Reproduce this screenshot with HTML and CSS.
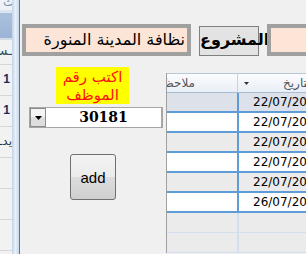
FILE: index.html
```html
<!DOCTYPE html>
<html>
<head>
    <meta charset="utf-8">
    <title>Employees</title>
    <link rel="stylesheet" href="styles.css">
</head>
<body>
<div class="screen">
    <div class="side">
        <div class="side-top">ث</div>
        <div class="side-band"></div>
        <div class="side-head"></div>
        <div class="side-cap">ـسـ</div>
        <div class="side-row">1</div>
        <div class="side-row">1</div>
        <div class="side-row side-ar">يدـ</div>
        <div class="side-row"></div>
        <div class="side-row"></div>
        <div class="side-row"></div>
    </div>
    <div class="frame"></div>
    <div class="main">
        <div class="top-row">
            <div class="field wide">نظافة المدينة المنورة</div>
            <div class="caption">المشروع</div>
            <div class="field rest"></div>
        </div>
        <div class="lower">
            <div class="form-col">
                <div class="hint">اكتب رقم<br>الموظف</div>
                <div class="combo">
                    <span class="drop">
                        <svg width="7" height="4" viewBox="0 0 7 4"><polygon points="0,0 7,0 3.5,4" fill="#000"/></svg>
                    </span>
                    <span class="value">30181</span>
                </div>
                <button type="button" class="add">add</button>
            </div>
            <div class="grid">
                <div class="row head">
                    <div class="cell notes"><span dir="rtl">ملاحظات</span></div>
                    <div class="cell date">
                        <svg width="5" height="3" viewBox="0 0 5 3"><polygon points="0,0 5,0 2.5,3" fill="#333"/></svg>
                        <span class="head-text" dir="rtl">التاريخ</span>
                    </div>
                </div>
                <div class="row first"><div class="cell notes"></div><div class="cell date">22/07/2015</div></div>
                <div class="row"><div class="cell notes"></div><div class="cell date">22/07/2015</div></div>
                <div class="row alt"><div class="cell notes"></div><div class="cell date">22/07/2015</div></div>
                <div class="row"><div class="cell notes"></div><div class="cell date">22/07/2015</div></div>
                <div class="row alt"><div class="cell notes"></div><div class="cell date">22/07/2015</div></div>
                <div class="row"><div class="cell notes"></div><div class="cell date">26/07/2015</div></div>
                <div class="row empty"><div class="cell notes"></div><div class="cell date"></div></div>
                <div class="row empty"><div class="cell notes"></div><div class="cell date"></div></div>
            </div>
        </div>
    </div>
</div>
</body>
</html>
```

FILE: styles.css
```css
* {
    box-sizing: border-box;
}

body {
    margin: 0;
    background: #f0f0f0;
    font-family: "DejaVu Sans", sans-serif;
    overflow: hidden;
}

.screen {
    display: flex;
    width: 306px;
    height: 254px;
    overflow: hidden;
}

/* window behind, only its edge shows */
.side {
    width: 12px;
    flex: none;
    background: #f2f2f2;
    overflow: hidden;
    display: flex;
    flex-direction: column;
}

.side-top {
    height: 10px;
    background: #eef2f7;
    color: #7f93ad;
    font-size: 12px;
    line-height: 4px;
    padding-left: 3px;
    overflow: hidden;
}

.side-band {
    height: 3px;
    background: #dce6f2;
}

.side-head {
    height: 27px;
    background: linear-gradient(#aac1dd, #9cb5d5);
    border-bottom: 2px solid #d3dce7;
}

.side-cap {
    height: 25px;
    border-bottom: 1px solid #d6d6d6;
    color: #2c4c5c;
    font-size: 13px;
    line-height: 22px;
    text-align: right;
    white-space: nowrap;
    direction: rtl;
    overflow: hidden;
}

.side-row {
    height: 31px;
    flex: none;
    border-bottom: 1px solid #d6d6d6;
    color: #1c2b5b;
    font: bold 12px "Liberation Sans", sans-serif;
    line-height: 28px;
    text-align: right;
    padding-right: 2px;
    overflow: hidden;
}

.side-ar {
    font: 12px "DejaVu Sans", sans-serif;
    line-height: 28px;
    padding-right: 0;
    white-space: nowrap;
    direction: rtl;
    color: #223344;
}

.frame {
    width: 8px;
    flex: none;
    background: linear-gradient(90deg, #c0d3ea, #eaf1f9 50%, #c5d6eb);
    border-right: 1px solid #737373;
}

.main {
    flex: 1;
    min-width: 0;
    overflow: hidden;
    padding-top: 24px;
    padding-left: 2px;
}

.top-row {
    display: flex;
    align-items: flex-end;
    gap: 8px;
    height: 32px;
}

.field {
    flex: none;
    height: 32px;
    border: 4px solid #a0a0a0;
    background: #fce4d6;
}

.field.wide {
    width: 169px;
    direction: rtl;
    font-size: 16px;
    line-height: 23px;
    padding-right: 2px;
    white-space: nowrap;
    overflow: hidden;
}

.field.rest {
    width: 60px;
}

.caption {
    flex: none;
    width: 60px;
    height: 30px;
    border: 1px solid #7f7f7f;
    background: #e3e3e3;
    font-weight: bold;
    font-size: 16px;
    line-height: 26px;
    text-align: center;
    white-space: nowrap;
}

.lower {
    display: flex;
    margin-top: 11px;
}

.form-col {
    width: 144px;
    flex: none;
    display: flex;
    flex-direction: column;
}

.hint {
    margin-left: 34px;
    width: 73px;
    height: 37px;
    background: #ffff00;
    color: #ff1010;
    text-align: center;
    direction: rtl;
    font-size: 15px;
    line-height: 18px;
    padding-top: 1px;
}

.combo {
    margin-top: 3px;
    margin-left: 7px;
    width: 134px;
    height: 21px;
    border: 1px solid #a6a6a6;
    border-right-width: 2px;
    background: #fff;
    display: flex;
}

.drop {
    width: 16px;
    height: 19px;
    border: 1px solid #8c8c8c;
    background: linear-gradient(#f4f4f4 50%, #dedede 50%);
    display: flex;
    align-items: center;
    justify-content: center;
}

.value {
    flex: 1;
    text-align: center;
    font: bold 14px "DejaVu Serif", serif;
    line-height: 19px;
}

.add {
    margin-top: 26px;
    margin-left: 48px;
    width: 46px;
    height: 46px;
    padding: 0;
    border: 1px solid #707070;
    border-radius: 3px;
    background: linear-gradient(#f3f3f3, #ebebeb 50%, #dddddd 50%, #cfcfcf);
    font: 15px "Liberation Sans", sans-serif;
    color: #000;
}

/* data grid */
.grid {
    margin-top: 6px;
    width: 200px;
    flex: none;
    border-left: 1px solid #a0a0a0;
}

.row {
    display: flex;
    height: 20px;
    border-bottom: 2px solid #5f9bd6;
}

.cell {
    white-space: nowrap;
    overflow: hidden;
    font-size: 12px;
    line-height: 18px;
}

.cell.notes {
    width: 70px;
    flex: none;
}

.cell.date {
    flex: 1;
    border-left: 2px solid #5f9bd6;
    padding-left: 14px;
}

.row.head {
    border-top: 1px solid #b9c8d8;
    border-bottom: 1px solid #a9bdd2;
    background: linear-gradient(#fbfcfe, #e9eff7);
    color: #555;
}

.row.head .notes {
    direction: rtl;
    padding-right: 42px;
    line-height: 18px;
}

.row.head .date {
    border-left: 1px solid #c9d3df;
    padding-left: 6px;
    display: flex;
    align-items: center;
}

.head-text {
    margin-left: 34px;
    line-height: 18px;
}

.row.first {
    background: #dde1ea;
}

.row.alt {
    background: #ebebeb;
}

.row:not(.head):not(.first):not(.alt) {
    background: #fff;
}

.row.empty {
    background: #ebebeb !important;
    border-bottom: 1px solid #d2dfee;
    height: 20px;
}

.row.empty .date {
    border-left-color: #d2dfee;
}
```
